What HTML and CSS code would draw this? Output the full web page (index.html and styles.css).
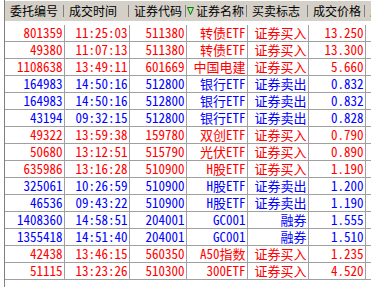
FILE: index.html
```html
<!DOCTYPE html>
<html lang="zh">
<head>
<meta charset="utf-8">
<link rel="stylesheet" href="styles.css">
</head>
<body>
<div class="frame">
  <table class="grid">
    <colgroup>
      <col class="c1"><col class="c2"><col class="c3"><col class="c4"><col class="c5"><col class="c6"><col class="c7">
    </colgroup>
    <thead>
      <tr>
        <th><span class="hd">委托编号</span></th>
        <th><span class="hd">成交时间</span></th>
        <th><span class="hd">证券代码</span></th>
        <th><span class="hd sorted"><svg class="sort" width="7" height="8" viewBox="0 0 7 8"><path d="M0.5 0.5 H6.5 L3.5 7.5 Z" fill="#b8e0b0" stroke="#008000" stroke-width="1"/></svg>证券名称</span></th>
        <th><span class="hd">买卖标志</span></th>
        <th><span class="hd">成交价格</span></th>
        <th><span class="hd">成</span></th>
      </tr>
    </thead>
    <tbody>
      <tr class="buy"><td>801359</td><td>11:25:03</td><td>511380</td><td>转债ETF</td><td>证券买入</td><td>13.250</td><td></td></tr>
      <tr class="buy"><td>49380</td><td>11:07:13</td><td>511380</td><td>转债ETF</td><td>证券买入</td><td>13.300</td><td></td></tr>
      <tr class="buy"><td>1108638</td><td>13:49:11</td><td>601669</td><td>中国电建</td><td>证券买入</td><td>5.660</td><td></td></tr>
      <tr class="sell"><td>164983</td><td>14:50:16</td><td>512800</td><td>银行ETF</td><td>证券卖出</td><td>0.832</td><td></td></tr>
      <tr class="sell"><td>164983</td><td>14:50:16</td><td>512800</td><td>银行ETF</td><td>证券卖出</td><td>0.832</td><td></td></tr>
      <tr class="sell"><td>43194</td><td>09:32:15</td><td>512800</td><td>银行ETF</td><td>证券卖出</td><td>0.828</td><td></td></tr>
      <tr class="buy"><td>49322</td><td>13:59:38</td><td>159780</td><td>双创ETF</td><td>证券买入</td><td>0.790</td><td></td></tr>
      <tr class="buy"><td>50680</td><td>13:12:51</td><td>515790</td><td>光伏ETF</td><td>证券买入</td><td>0.890</td><td></td></tr>
      <tr class="buy"><td>635986</td><td>13:16:28</td><td>510900</td><td>H股ETF</td><td>证券买入</td><td>1.190</td><td></td></tr>
      <tr class="sell"><td>325061</td><td>10:26:59</td><td>510900</td><td>H股ETF</td><td>证券卖出</td><td>1.200</td><td></td></tr>
      <tr class="sell"><td>46536</td><td>09:43:22</td><td>510900</td><td>H股ETF</td><td>证券卖出</td><td>1.190</td><td></td></tr>
      <tr class="sell"><td>1408360</td><td>14:58:51</td><td>204001</td><td>GC001</td><td>融券</td><td>1.555</td><td></td></tr>
      <tr class="sell"><td>1355418</td><td>14:51:40</td><td>204001</td><td>GC001</td><td>融券</td><td>1.510</td><td></td></tr>
      <tr class="buy"><td>42438</td><td>13:46:15</td><td>560350</td><td>A50指数</td><td>证券买入</td><td>1.235</td><td></td></tr>
      <tr class="buy"><td>51115</td><td>13:23:26</td><td>510300</td><td>300ETF</td><td>证券买入</td><td>4.520</td><td></td></tr>
    </tbody>
  </table>
</div>
</body>
</html>
```

FILE: styles.css
```css
html, body {
  margin: 0;
  padding: 0;
  background: #ffffff;
  overflow: hidden;
}
body {
  width: 371px;
  height: 287px;
}
.frame {
  margin-left: 4px;
  height: 287px;
  border-left: 1px solid #808080;
  overflow: hidden;
  font-family: "Noto Sans Mono CJK SC", "Noto Sans CJK SC", monospace;
  font-size: 13px;
}
.grid {
  border-collapse: collapse;
  table-layout: fixed;
  width: 420px;
}
.c1 { width: 59px; }
.c2 { width: 65px; }
.c3 { width: 57px; }
.c4 { width: 61px; }
.c5 { width: 61px; }
.c6 { width: 57px; }
.c7 { width: 60px; }
.grid th {
  height: 20px;
  padding: 0;
  background: #d4d0c8;
  border-bottom: 1px solid #808080;
  border-top: 1px solid #ffffff;
  font-weight: normal;
  font-size: 12px;
  text-align: left;
  color: #000000;
  white-space: nowrap;
  overflow: hidden;
}
.hd {
  position: relative;
  display: flex;
  align-items: center;
  height: 20px;
  padding-left: 5px;
  line-height: 20px;
}
.hd::after {
  content: "";
  position: absolute;
  right: 0;
  top: 4px;
  width: 1px;
  height: 12px;
  background: #808080;
  box-shadow: 1px 0 0 #ffffff;
}
.sorted {
  padding-left: 1px;
}
.sort {
  margin-right: 2px;
  flex: none;
}
.grid tbody tr:first-child td {
  border-top-width: 4px;
  border-top-color: #ffffff;
}
.grid td {
  height: 16px;
  padding: 0 1px 0 0;
  border: 1px solid #a0a0a0;
  border-left: 0;
  text-align: right;
  line-height: 16px;
  white-space: nowrap;
  overflow: hidden;
}
.buy td { color: #ff0000; }
.sell td { color: #0000ff; }
```
